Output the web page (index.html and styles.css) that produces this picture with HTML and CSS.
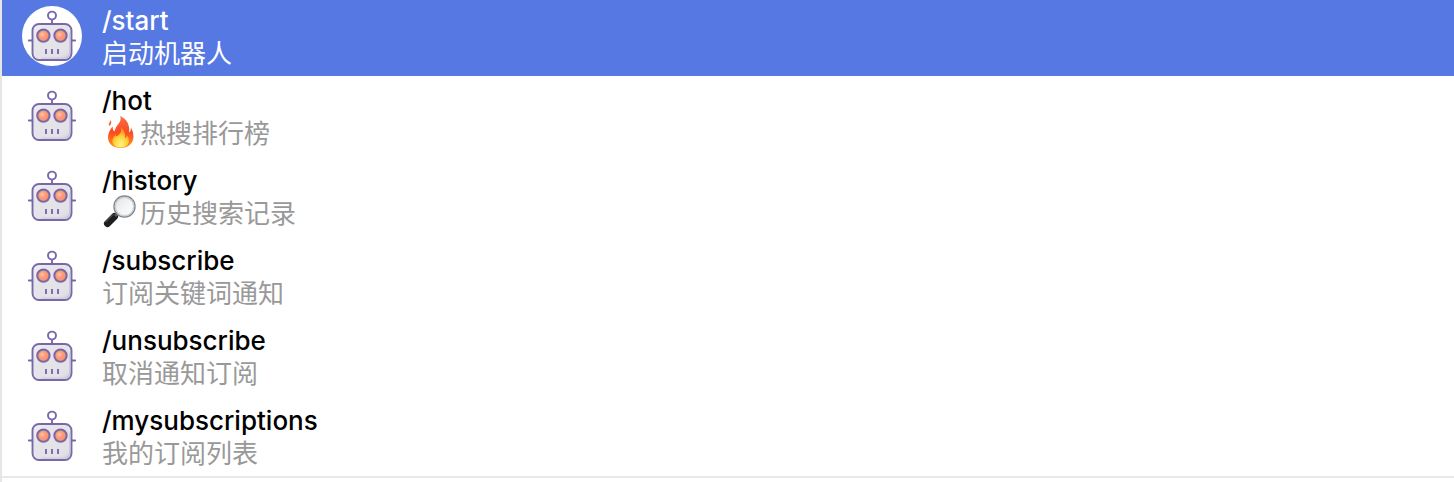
FILE: index.html
```html
<!DOCTYPE html>
<html lang="zh-CN">
<head>
<meta charset="utf-8">
<meta name="viewport" content="width=device-width, initial-scale=1">
<title>Bot commands</title>
<link rel="stylesheet" href="styles.css">
</head>
<body>
<svg class="sprite" aria-hidden="true">
  <defs>
    <linearGradient id="head-fill" x1="0" y1="0" x2="1" y2="1">
      <stop offset="0" stop-color="#f2f2f5"/><stop offset=".25" stop-color="#e6e6ea"/><stop offset=".8" stop-color="#e1e1e6"/><stop offset="1" stop-color="#cfcdda"/>
    </linearGradient>
    <radialGradient id="eye-fill" cx=".42" cy=".42" r=".6">
      <stop offset="0" stop-color="#ffd0b8"/><stop offset=".35" stop-color="#ff9f7c"/><stop offset="1" stop-color="#fb8763"/>
    </radialGradient>
    <linearGradient id="flame-outer" x1="0" y1="0" x2="0" y2="1">
      <stop offset="0" stop-color="#f5734a"/><stop offset=".5" stop-color="#fb4a22"/><stop offset="1" stop-color="#ff9a1e"/>
    </linearGradient>
    <radialGradient id="flame-inner" cx=".5" cy=".85" r=".8">
      <stop offset="0" stop-color="#fff58a"/><stop offset=".45" stop-color="#ffd53c"/><stop offset="1" stop-color="#ff7a1a"/>
    </radialGradient>
    <linearGradient id="lens-fill" x1="0" y1="0" x2="1" y2="1">
      <stop offset="0" stop-color="#dde1e4"/><stop offset=".5" stop-color="#f2f4f5"/><stop offset="1" stop-color="#fff"/>
    </linearGradient>
  </defs>
  <symbol id="robot" viewBox="0 0 60 60">
    <g stroke="#7868aa" stroke-width="1.9" fill="none" stroke-linecap="round">
      <circle cx="30" cy="9.6" r="4"/>
      <path d="M30 13.6v4M6.8 34.5h4M49.2 34.5h4"/>
      <rect x="10.5" y="18" width="39" height="36" rx="6.5" fill="url(#head-fill)"/>
      <path d="M47.8 27v18q0 7-6 7H20" stroke="#c8c5d8" stroke-width="1.2"/>
      <circle cx="21.4" cy="29.6" r="6.2" fill="url(#eye-fill)" stroke-width="2"/>
      <circle cx="38.5" cy="29.6" r="6.2" fill="url(#eye-fill)" stroke-width="2"/>
      <path d="M24 43v5M30 43v5M36 43v5" stroke-width="1.9" stroke-linecap="butt"/>
    </g>
  </symbol>
  <symbol id="fire" viewBox="0 0 38 36">
    <path d="M18 2C20 6 17 9 14.5 12.5Q13 15 12.5 17.5Q10.5 16 10.5 12.5Q6 18 6 23.5C6 30 11.5 34 18.5 34C26 34 31.5 29.5 31.5 22.5Q31.500 18 29 13.5Q29 17 27 18.5C28 11 25 5 18 2Z" fill="url(#flame-outer)"/>
    <path d="M19 13Q20 18 16.5 21Q14 23.5 13.5 21Q9.5 25 10.5 28.5Q12 33.5 18.5 33.5Q26 33 27 27.5Q27.5 24 25 21.5Q24.5 24 23 24Q24 18 19 13Z" fill="url(#flame-inner)"/>
    <path d="M9 6Q10 9 8 12Q5 11 9 6Z" fill="#f8693d"/>
  </symbol>
  <symbol id="magnifier" viewBox="0 0 38 36">
    <path d="M12.5 22.5L5.5 29.5" stroke="#1d1e20" stroke-width="7" stroke-linecap="round"/>
    <path d="M11 20.5L3.5 28" stroke="#65686b" stroke-width="1"/>
    <path d="M16 19L13 22" stroke="#55585c" stroke-width="3"/>
    <circle cx="22.5" cy="12.5" r="10.5" fill="url(#lens-fill)" stroke="#85888c" stroke-width="1.4"/>
    <circle cx="22.5" cy="12.5" r="9.2" fill="none" stroke="#ccd0d3" stroke-width="1.2"/>
  </symbol>
</svg>
<main class="panel">
  <ul class="commands">
    <li><button class="command command--active" type="button">
      <svg class="avatar" aria-hidden="true"><use href="#robot"/></svg>
      <span class="text"><span class="name">/start</span><span class="description">启动机器人</span></span>
    </button></li>
    <li><button class="command" type="button">
      <svg class="avatar" aria-hidden="true"><use href="#robot"/></svg>
      <span class="text"><span class="name">/hot</span><span class="description"><svg class="emoji" role="img" aria-label="🔥"><use href="#fire"/></svg>热搜排行榜</span></span>
    </button></li>
    <li><button class="command" type="button">
      <svg class="avatar" aria-hidden="true"><use href="#robot"/></svg>
      <span class="text"><span class="name">/history</span><span class="description"><svg class="emoji" role="img" aria-label="🔎"><use href="#magnifier"/></svg>历史搜索记录</span></span>
    </button></li>
    <li><button class="command" type="button">
      <svg class="avatar" aria-hidden="true"><use href="#robot"/></svg>
      <span class="text"><span class="name">/subscribe</span><span class="description">订阅关键词通知</span></span>
    </button></li>
    <li><button class="command" type="button">
      <svg class="avatar" aria-hidden="true"><use href="#robot"/></svg>
      <span class="text"><span class="name">/unsubscribe</span><span class="description">取消通知订阅</span></span>
    </button></li>
    <li><button class="command" type="button">
      <svg class="avatar" aria-hidden="true"><use href="#robot"/></svg>
      <span class="text"><span class="name">/mysubscriptions</span><span class="description">我的订阅列表</span></span>
    </button></li>
  </ul>
</main>
</body>
</html>
```
FILE: styles.css
```css
* {
  box-sizing: border-box;
}

body {
  margin: 0;
  background: #fff;
  font-family: Inter, "Noto Sans CJK SC", sans-serif;
}

.sprite {
  position: absolute;
  width: 0;
  height: 0;
}

.panel {
  min-height: 100vh;
  border-left: 2px solid #e6e6e6;
}

.commands {
  margin: 0;
  padding: 0;
  list-style: none;
  border-bottom: 2px solid #e8e8e8;
}

.command {
  display: flex;
  align-items: center;
  gap: 20px;
  width: 100%;
  padding: 8px 20px;
  border: 0;
  background: #fff;
  color: #000;
  font: inherit;
  text-align: left;
}

.command--active {
  padding: 4px 20px 8px;
  background: #5678e3;
  color: #fff;
}

.avatar {
  flex: none;
  width: 60px;
  height: 60px;
  border-radius: 50%;
  background: #fff;
}

.text {
  display: flex;
  flex-direction: column;
  padding-bottom: 2px;
}

.name,
.description {
  display: flex;
  align-items: center;
  font-size: 26px;
}

.name {
  height: 34px;
  font-weight: 450;
  line-height: 34px;
}

.description {
  height: 28px;
  line-height: 28px;
  font-family: "Noto Sans CJK SC", sans-serif;
  color: #999;
}

.command--active .description {
  color: #fff;
}

.emoji {
  flex: none;
  width: 38px;
  height: 36px;
}
```
